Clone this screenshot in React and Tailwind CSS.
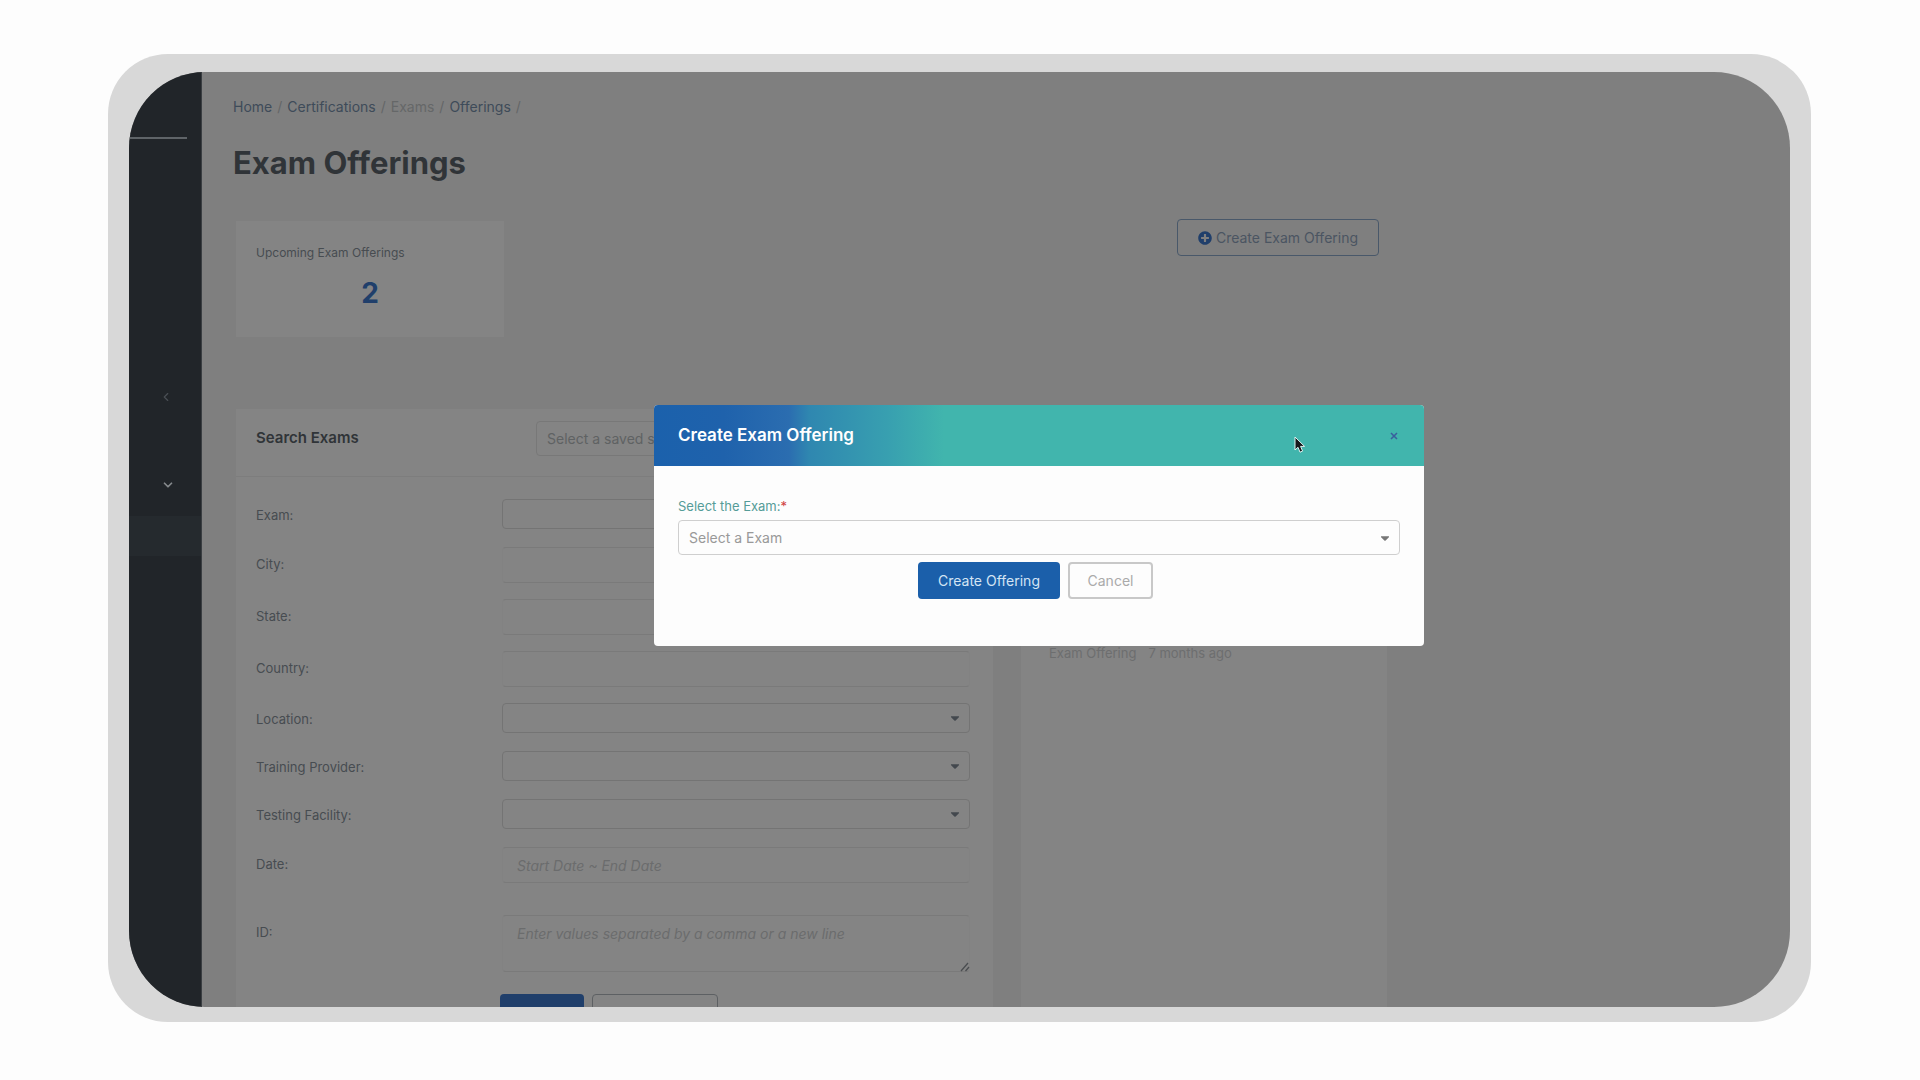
import React from 'react';
import { FaPlusCircle, FaCaretDown } from 'react-icons/fa';
import { ChevronLeft, ChevronDown } from 'lucide-react';

const breadcrumbs = [
  { label: 'Home' },
  { label: 'Certifications' },
  { label: 'Exams', muted: true },
  { label: 'Offerings' },
];

const searchFields = [
  { id: 'exam', label: 'Exam:', type: 'select' },
  { id: 'city', label: 'City:', type: 'text' },
  { id: 'state', label: 'State:', type: 'text' },
  { id: 'country', label: 'Country:', type: 'text' },
  { id: 'location', label: 'Location:', type: 'select' },
  { id: 'provider', label: 'Training Provider:', type: 'select' },
  { id: 'facility', label: 'Testing Facility:', type: 'select' },
  { id: 'date', label: 'Date:', type: 'text', placeholder: 'Start Date ~ End Date' },
];

const Select = ({ id, placeholder = '', className = '', caret = 'text-[#43484e]', ...rest }) => (
  <div className="relative">
    <select id={id} className={`block w-full appearance-none rounded border bg-transparent ${className}`} {...rest}>
      <option>{placeholder}</option>
    </select>
    <FaCaretDown className={`pointer-events-none absolute right-2 top-1/2 size-3.5 -translate-y-1/2 ${caret}`} />
  </div>
);

const Sidebar = () => (
  <aside className="flex w-[73px] shrink-0 flex-col border-r border-[#3a3e42] bg-[#212529]">
    <div className="mt-[65px] mr-3.5 h-0.5 bg-[#5f6468]" />
    <button aria-label="Collapse section" className="mt-[251px] ml-[30px] w-3.5 text-[#4a4f54]">
      <ChevronLeft size={14} />
    </button>
    <button aria-label="Expand section" className="mt-[74px] ml-8 w-3.5 text-[#85898c]">
      <ChevronDown size={14} strokeWidth={3} />
    </button>
    <div className="mt-6 h-10 bg-[#252a2e]" />
  </aside>
);

const SearchCard = () => (
  <section className="bg-[#848484]">
    <header className="flex h-[68px] items-center justify-between border-b border-[#7d7d7d] pb-2 pl-5 pr-[23px]">
      <h2 className="text-[15px] font-semibold text-[#303438]">Search Exams</h2>
      <div className="w-[434px]">
        <Select
          aria-label="Saved search"
          placeholder="Select a saved search"
          className="h-[35px] border-[#787878] px-2.5 text-sm text-[#5f6263]"
        />
      </div>
    </header>
    <form className="pl-5 pr-[23px] pt-[22px] text-[13px] text-[#474c51]">
      {searchFields.map(({ id, label, type, placeholder }) => (
        <div key={id} className={`grid grid-cols-[246px_minmax(0,1fr)] items-center ${type === 'select' ? 'mb-[18px]' : 'mb-4'}`}>
          <label htmlFor={id} className={type === 'select' ? 'pt-1' : ''}>{label}</label>
          {type === 'select' ? (
            <Select id={id} className="h-[30px] border-[#747474]" />
          ) : (
            <input
              id={id}
              type="text"
              placeholder={placeholder}
              className="h-9 w-full rounded border border-x-[#828282] border-y-[#7a7a7a] px-3.5 text-sm italic placeholder:text-[#6b6c6d]"
            />
          )}
        </div>
      ))}
      <div className="mt-8 grid grid-cols-[246px_minmax(0,1fr)] items-start">
        <label htmlFor="ids" className="pt-2">ID:</label>
        <div className="relative">
          <textarea
            id="ids"
            placeholder="Enter values separated by a comma or a new line"
            className="block h-[57px] w-full resize-none rounded border border-x-[#828282] border-y-[#7a7a7a] px-3.5 py-2 text-sm italic placeholder:text-[#6b6c6d]"
          />
          <svg viewBox="0 0 10 10" className="absolute bottom-0 right-0 size-2.5" stroke="#4a4d50" strokeWidth="1.3">
            <path d="M1 9 8 1M5.5 9 9 5" fill="none" />
          </svg>
        </div>
      </div>
      <div className="mt-[22px] flex gap-2 pl-[244px]">
        <button type="button" aria-label="Search" className="h-11 w-[84px] rounded bg-[#203f6b]" />
        <button type="button" aria-label="Clear search" className="h-11 w-[126px] rounded border border-[#5d6063]" />
      </div>
    </form>
  </section>
);

const CreateModal = () => (
  <div role="dialog" aria-labelledby="modal-title" className="w-[770px] overflow-hidden rounded bg-[#fdfdfd]">
    <header className="flex h-[61px] items-center justify-between bg-[linear-gradient(90deg,#1b61ac_0,#1f62ac_70px,#2b6db0_135px,#2f87b0_155px,#38a0b0_235px,#41b5ad_290px)] px-6">
      <h2 id="modal-title" className="text-[17px] font-semibold text-white">Create Exam Offering</h2>
      <button aria-label="Close" className="flex size-3 items-center justify-center">
        <svg viewBox="0 0 8 8" className="size-2" stroke="#3a5f9d" strokeWidth="1.6">
          <path d="M1 1 7 7M7 1 1 7" />
        </svg>
      </button>
    </header>
    <form className="px-6 pb-[47px] pt-[30px]">
      <label htmlFor="modal-exam" className="mb-1 block text-[13px] leading-5 text-[#559c98]">
        Select the Exam:<span className="text-[#d04040]">*</span>
      </label>
      <Select
        id="modal-exam"
        placeholder="Select a Exam"
        className="h-[35px] border-[#cfcfcf] px-2.5 text-sm text-[#999]"
        caret="text-[#777]"
      />
      <div className="mt-[7px] flex justify-center gap-2 pr-[7px]">
        <button type="button" className="h-[37px] w-[142px] rounded bg-[#1b5faa] text-sm text-[#d3e4f4]">Create Offering</button>
        <button type="button" className="h-[37px] w-[85px] rounded border-2 border-[#c8c8c8] text-sm text-[#aaa]">Cancel</button>
      </div>
    </form>
  </div>
);

const App = () => (
  <div className="h-screen bg-[#fdfdfd] pb-[58px] pl-[108px] pr-[109px] pt-[54px] font-['Inter',sans-serif]">
    <div className="h-full rounded-[60px] bg-[#d8d8d8] pb-[15px] pl-[21px] pr-[21px] pt-[18px]">
      <div className="relative flex h-full overflow-hidden rounded-[76px] bg-[#7f7f7f]">
        <Sidebar />
        <main className="min-w-0 flex-1 pl-[31px] pt-[25px]">
          <nav aria-label="Breadcrumb" className="flex gap-[5px] text-sm leading-5 text-[#646667]">
            {breadcrumbs.map(({ label, muted }) => (
              <React.Fragment key={label}>
                <a href="#" className={muted ? 'text-[#656768]' : 'text-[#3e4b59]'}>{label}</a>
                <span>/</span>
              </React.Fragment>
            ))}
          </nav>
          <h1 className="mt-7 text-[31px] font-bold leading-9 text-[#303438]">Exam Offerings</h1>

          <div className="ml-[3px] mt-10 max-w-[1151px]">
            <div className="flex items-start justify-between pr-2">
              <div className="h-[116px] w-[268px] bg-[#848484] px-5 pt-[22px]">
                <p className="text-xs leading-5 text-[#474c51]">Upcoming Exam Offerings</p>
                <p className="mt-3 text-center text-[28px] font-bold leading-9 text-[#203f6b]">2</p>
              </div>
              <button className="-mt-0.5 flex h-[37px] w-[202px] items-center justify-center gap-1 rounded border border-[#49586a] text-sm text-[#4b5562]">
                <FaPlusCircle className="size-3.5 text-[#203f6b]" />
                Create Exam Offering
              </button>
            </div>

            <div className="mt-[72px] grid grid-cols-[minmax(0,1fr)_366px] gap-7">
              <SearchCard />
              <section className="bg-[#848484] px-7 pt-[234px]">
                <p className="flex gap-3 text-[13px] leading-5 text-[#6d6e6f]">
                  <span>Exam Offering</span>
                  <span>7 months ago</span>
                </p>
              </section>
            </div>
          </div>
        </main>

        <div className="absolute inset-0 flex items-start justify-center pl-[159px] pt-[333px]">
          <CreateModal />
        </div>
        <svg viewBox="0 0 12 18" className="absolute left-[1165px] top-[364px] h-[18px] w-3">
          <path d="M1 1v13l3-2.7 2 4.9 2.6-1.1-2-4.7h4z" fill="#17191c" stroke="#dff3f1" strokeWidth="1" />
        </svg>
      </div>
    </div>
  </div>
);

export default App;
